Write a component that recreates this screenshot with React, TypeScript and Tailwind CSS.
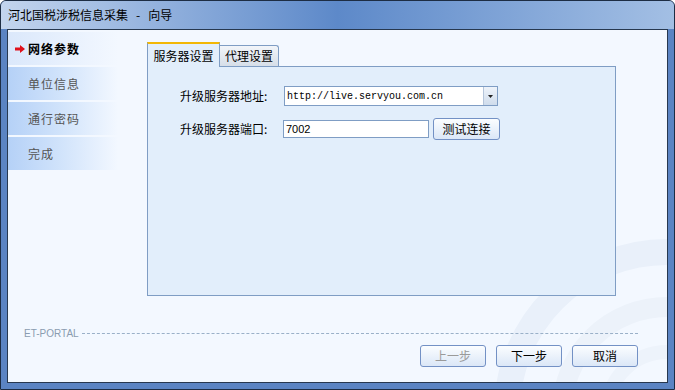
import React from "react";

const cjk = { fontFamily: '"Noto Sans CJK SC", "Liberation Sans", sans-serif' };

const NavItem: React.FC<{ label: string; active?: boolean }> = ({ label, active }) => (
  <div
    className={
      "h-[33px] flex items-center text-[12px] tracking-[1px] " +
      (active
        ? "bg-gradient-to-r from-[#dbe8fb] to-[#f3f8ff] pl-[7px] font-bold text-black"
        : "bg-gradient-to-r from-[#b5d1f7] via-[#d2e4fb] to-[#f3f8ff] pl-[20px] text-[#555]")
    }
  >
    {active && (
      <svg className="mr-[3px]" width="10" height="8" viewBox="0 0 10 8">
        <path d="M0 2.5h5V0l5 4-5 4V5.5H0z" fill="#e0101a" />
      </svg>
    )}
    {label}
  </div>
);

const Btn: React.FC<{ label: string; disabled?: boolean; w?: string }> = ({ label, disabled, w }) => (
  <button
    className={
      (w ?? "w-[66px]") +
      " h-[22px] rounded-[3px] border border-[#7391c5] bg-gradient-to-b from-[#fbfdff] to-[#dbe7f7] text-[12px] " +
      (disabled ? "text-[#9a9a9a]" : "text-black")
    }
    style={cjk}
  >
    {label}
  </button>
);

export default function App() {
  return (
    <div className="w-[675px] h-[390px] bg-[#5b84c3] border border-[#1d2d44] rounded-t-[6px] flex flex-col overflow-hidden" style={cjk}>
      {/* title bar */}
      <div className="h-[28px] shrink-0 bg-gradient-to-r from-[#c3d5ee] via-[#5d89c9] to-[#a3bfe4] flex items-center pl-[7px] text-[12px] text-black whitespace-pre">
        河北国税涉税信息采集   -   向导
      </div>
      {/* client */}
      <div className="relative flex-1 mx-[6px] mb-[6px] bg-[#f3f8ff] border border-[#27384f] flex flex-col overflow-hidden">
        <svg className="absolute right-0 bottom-0" width="200" height="200" viewBox="0 0 200 200">
          <circle cx="200" cy="230" r="160" fill="none" stroke="#e9f0fa" strokeWidth="26" />
          <circle cx="200" cy="230" r="105" fill="none" stroke="#ecf2fa" strokeWidth="20" />
          <circle cx="200" cy="230" r="60" fill="none" stroke="#edf3fb" strokeWidth="14" />
        </svg>
        <div className="relative flex flex-1">
          {/* left nav */}
          <div className="w-[110px] pt-[2px] flex flex-col gap-[2px]">
            <NavItem label="网络参数" active />
            <NavItem label="单位信息" />
            <NavItem label="通行密码" />
            <NavItem label="完成" />
          </div>
          {/* tabs */}
          <div className="ml-[29px] mt-[11px] w-[469px] flex flex-col">
            <div className="flex items-end h-[25px]">
              <div className="w-[73px] h-[25px] border-t-[2px] border-t-[#f2b705] border-l border-r border-[#7f9dc4] bg-[#e2eefb] flex items-center justify-center text-[12px] text-black -mb-[1px] relative z-10">
                服务器设置
              </div>
              <div className="w-[59px] h-[21px] border border-l-0 border-[#7f9dc4] border-b-0 rounded-tr-[3px] bg-gradient-to-b from-[#f2f5f9] to-[#d6dee8] flex items-center justify-center text-[12px] text-black">
                代理设置
              </div>
            </div>
            <div className="h-[230px] border border-[#7f9dc4] bg-[#e2eefb] pl-[32px] pt-[19px] flex flex-col gap-[12px]">
              <div className="flex items-center text-[12px]">
                <span className="w-[104px]">升级服务器地址:</span>
                <div className="w-[214px] h-[20px] border border-[#7f9dc4] bg-white flex items-center">
                  <span className="flex-1 pl-[2px] text-[10px] text-black" style={{ fontFamily: '"Liberation Mono", monospace' }}>
                    http://live.servyou.com.cn
                  </span>
                  <div className="w-[14px] h-[18px] bg-gradient-to-b from-[#eef3fa] to-[#cfdcec] border-l border-[#b5c5db] flex items-center justify-center">
                    <svg width="5" height="3" viewBox="0 0 5 3"><path d="M0 0h5L2.5 3z" fill="#222" /></svg>
                  </div>
                </div>
              </div>
              <div className="flex items-center text-[12px]">
                <span className="w-[103px]">升级服务器端口:</span>
                <div className="w-[146px] h-[18px] border border-[#7f9dc4] bg-white flex items-center pl-[2px] text-[11px]" style={{ fontFamily: '"Liberation Sans", sans-serif' }}>
                  7002
                </div>
                <div className="ml-[4px]">
                  <Btn label="测试连接" w="w-[67px]" />
                </div>
              </div>
            </div>
          </div>
        </div>
        {/* footer */}
        <div className="relative flex items-center pl-[16px] pr-[29px] h-[14px] mb-[5px]">
          <span className="text-[10px] text-[#8a9cb0] mr-[3px]" style={{ fontFamily: '"Liberation Sans", sans-serif' }}>
            ET-PORTAL
          </span>
          <div className="flex-1 border-t border-dashed border-[#9ab0c8]" />
        </div>
        <div className="relative flex justify-end gap-[10px] pr-[29px] pb-[15px]">
          <Btn label="上一步" disabled />
          <Btn label="下一步" />
          <Btn label="取消" />
        </div>
      </div>
    </div>
  );
}
